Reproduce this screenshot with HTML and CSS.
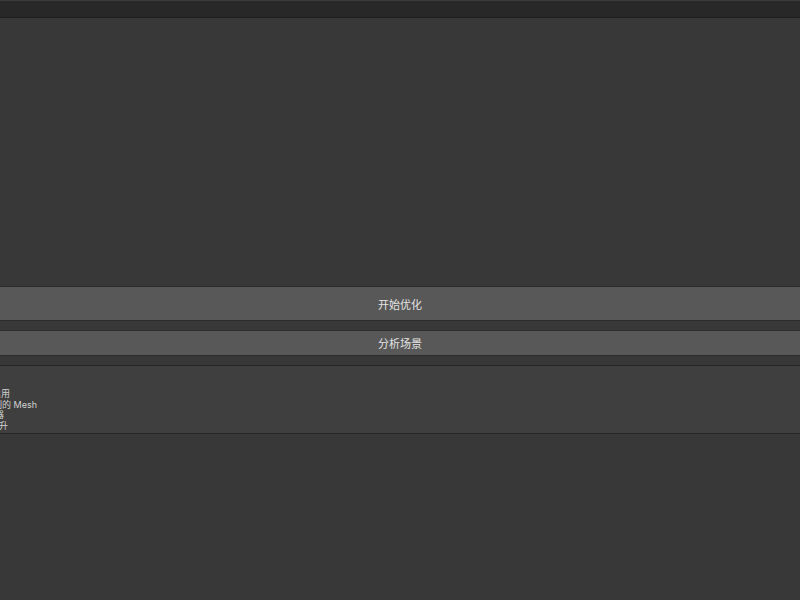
FILE: index.html
```html
<!DOCTYPE html>
<html lang="zh-CN">
<head>
<meta charset="utf-8">
<title>场景优化</title>
<link rel="stylesheet" href="styles.css">
</head>
<body>
<div class="window">
  <div class="topline"></div>
  <div class="toolbar"></div>
  <div class="canvas"></div>
  <div class="btn btn-main">开始优化</div>
  <div class="btn btn-sub">分析场景</div>
  <div class="helpbox">
    <div class="line l1">合并相同材质的物体并启用</div>
    <div class="line l2">清除冗余复制的 Mesh</div>
    <div class="line l3">合并网格渲染器</div>
    <div class="line l4">使渲染性能显著提升</div>
  </div>
</div>
</body>
</html>
```
FILE: styles.css
```css
html, body {
  margin: 0;
  padding: 0;
  width: 800px;
  height: 600px;
  overflow: hidden;
  background: #383838;
  font-family: "Noto Sans CJK SC", "Noto Sans", sans-serif;
}
.window {
  display: flex;
  flex-direction: column;
  width: 800px;
  height: 600px;
  overflow: hidden;
}
.topline {
  height: 1px;
  background: #3a3a3a;
}
.toolbar {
  height: 16px;
  background: #282828;
  border-bottom: 1px solid #1e1e1e;
}
.canvas {
  height: 268px;
}
.btn {
  display: flex;
  align-items: center;
  justify-content: center;
  background: #585858;
  border-top: 1px solid #2c2c2c;
  border-bottom: 1px solid #2c2c2c;
  color: #e4e4e4;
  font-size: 11px;
}
.btn-main {
  height: 33px;
}
.btn-sub {
  height: 24px;
  margin-top: 9px;
}
.helpbox {
  margin-top: 9px;
  height: 44px;
  padding: 23px 0 0 0;
  background: #3f3f3f;
  border-top: 1px solid #262626;
  border-bottom: 1px solid #262626;
  overflow: hidden;
  color: #d2d2d2;
  font-family: "Inter", "Noto Sans CJK SC", sans-serif;
  font-size: 9px;
  line-height: 10.5px;
}
.line {
  width: max-content;
  white-space: nowrap;
  transform: translateX(-100%);
}
.l1 { margin-left: 10px; }
.l2 { margin-left: 37px; }
.l3 { margin-left: 4px; }
.l4 { margin-left: 8px; }
```
